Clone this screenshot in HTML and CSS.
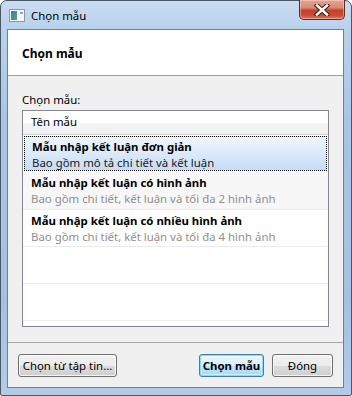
FILE: index.html
```html
<!DOCTYPE html>
<html lang="vi">
<head>
    <meta charset="UTF-8">
    <title>Chọn mẫu</title>
    <link rel="stylesheet" href="styles.css">
</head>
<body>
    <div class="window">
        <div class="titlebar">
            <svg class="app-icon" width="16" height="13" viewBox="0 0 16 13">
                <rect x="0.5" y="0.5" width="15" height="12" fill="#f4f6f8" stroke="#8c98a4"/>
                <rect x="2" y="2" width="6" height="9" fill="url(#g)"/>
                <rect x="11" y="3" width="3" height="2" fill="#9aa6b2"/>
                <defs>
                    <linearGradient id="g" x1="0" y1="0" x2="1" y2="1">
                        <stop offset="0" stop-color="#3d7bb8"/>
                        <stop offset="1" stop-color="#5aa56e"/>
                    </linearGradient>
                </defs>
            </svg>
            <span class="title-text">Chọn mẫu</span>
            <button class="close-btn">
                <svg width="18" height="12" viewBox="0 0 18 12">
                    <path d="M4 1.5 L14 10.5 M14 1.5 L4 10.5" stroke="#4a2626" stroke-width="4.6" stroke-linecap="square"/>
                    <path d="M4 1.5 L14 10.5 M14 1.5 L4 10.5" stroke="#ffffff" stroke-width="2.4" stroke-linecap="square"/>
                </svg>
            </button>
        </div>
        <div class="client">
            <div class="dialog-header">Chọn mẫu</div>
            <div class="dialog-body">
                <div class="field-label">Chọn mẫu:</div>
                <div class="listbox">
                    <div class="list-head">Tên mẫu</div>
                    <div class="list-row selected">
                        <div class="row-title">Mẫu nhập kết luận đơn giản</div>
                        <div class="row-desc">Bao gồm mô tả chi tiết và kết luận</div>
                    </div>
                    <div class="list-row hover">
                        <div class="row-title">Mẫu nhập kết luận có hình ảnh</div>
                        <div class="row-desc">Bao gồm chi tiết, kết luận và tối đa 2 hình ảnh</div>
                    </div>
                    <div class="list-row">
                        <div class="row-title">Mẫu nhập kết luận có nhiều hình ảnh</div>
                        <div class="row-desc">Bao gồm chi tiết, kết luận và tối đa 4 hình ảnh</div>
                    </div>
                    <div class="list-row empty"></div>
                    <div class="list-row empty"></div>
                </div>
            </div>
            <div class="dialog-footer">
                <button class="btn btn-file">Chọn từ tập tin...</button>
                <div class="spacer"></div>
                <button class="btn btn-default">Chọn mẫu</button>
                <button class="btn btn-close">Đóng</button>
            </div>
        </div>
    </div>
</body>
</html>
```

FILE: styles.css
```css
* {
    margin: 0;
    padding: 0;
    box-sizing: border-box;
}

body {
    font-family: "Noto Sans", "Open Sans", sans-serif;
    font-size: 11.4px;
    color: #000;
    background: #ffffff;
}

.window {
    width: 352px;
    height: 396px;
    border: 1px solid #4b5866;
    border-radius: 7px 7px 2px 2px;
    background: linear-gradient(to bottom, #c9dcf1 0px, #b9d1ec 28px, #a9c5e6 120px, #a4c1e4 300px, #b2cbe8 396px);
    display: flex;
    flex-direction: column;
    padding: 0 7px 7px 6px;
}

.titlebar {
    height: 28px;
    display: flex;
    align-items: center;
    position: relative;
}

.app-icon {
    margin-left: 2px;
    margin-top: 1px;
}

.title-text {
    margin-left: 6px;
    margin-top: 1px;
    color: #000;
}

.close-btn {
    position: absolute;
    top: -1px;
    right: -1px;
    width: 46px;
    height: 20px;
    border: 1px solid #5d2b23;
    border-top: none;
    border-radius: 0 0 5px 5px;
    background: linear-gradient(to bottom, #e4a594 0%, #d88a76 40%, #c5412a 55%, #c94a33 80%, #dc7a5f 100%);
    display: flex;
    align-items: center;
    justify-content: center;
    box-shadow: inset 0 0 0 1px rgba(255, 220, 210, 0.45);
}

.client {
    flex: 1;
    border: 1px solid #6f8094;
    display: flex;
    flex-direction: column;
    background: #f0f0f0;
}

.dialog-header {
    height: 46px;
    background: #ffffff;
    border-bottom: 1px solid #a0a0a0;
    padding: 15px 0 0 14px;
    font-weight: bold;
    font-size: 12px;
}

.dialog-body {
    flex: 1;
    padding: 16px 14px 15px 14px;
    display: flex;
    flex-direction: column;
    border-bottom: 1px solid #a7a7a7;
}

.field-label {
    height: 18px;
}

.listbox {
    flex: 1;
    border: 1px solid #828790;
    background: #ffffff;
    display: flex;
    flex-direction: column;
    overflow: hidden;
}

.list-head {
    height: 24px;
    padding: 3px 0 0 8px;
    background: linear-gradient(to bottom, #ffffff 0%, #ffffff 50%, #f4f5f6 51%, #eef0f2 100%);
    border-bottom: 1px solid #d5d5d5;
    margin-bottom: 1px;
}

.list-row {
    height: 37px;
    padding: 3px 0 0 8px;
    border-bottom: 1px solid #ececec;
    line-height: 16px;
    white-space: nowrap;
}

.list-row.selected {
    margin: 0 1px 1px;
    height: 35px;
    padding: 2px 0 0 7px;
    border: 1px dotted #000;
    background: linear-gradient(to bottom, #eef5fd 0%, #dce9fb 50%, #c6dcf8 100%);
}

.list-row.hover {
    background: #f7f7f7;
    height: 38px;
}

.row-title {
    font-weight: bold;
}

.row-desc {
    color: #8f8f8f;
}

.selected .row-desc {
    color: #1a1a1a;
}

.dialog-footer {
    height: 44px;
    display: flex;
    align-items: center;
    padding: 0 10px;
    gap: 8px;
}

.spacer {
    flex: 1;
}

.btn {
    height: 23px;
    font-family: inherit;
    font-size: 11.4px;
    color: #000;
    white-space: nowrap;
    border: 1px solid #707070;
    border-radius: 3px;
    background: linear-gradient(to bottom, #f2f2f2 0%, #ebebeb 50%, #dddddd 51%, #cfcfcf 100%);
    box-shadow: inset 0 0 0 1px rgba(255, 255, 255, 0.75);
    margin-top: 1px;
}

.btn-file {
    width: 99px;
}

.btn-default {
    width: 65px;
    font-weight: bold;
    border-color: #3c7fb1;
    box-shadow: inset 0 0 0 1px #7fdcff, inset 0 0 0 2px rgba(255, 255, 255, 0.5);
    background: linear-gradient(to bottom, #eaf6fd 0%, #d9f0fc 50%, #bee6fd 51%, #a7d9f5 100%);
}

.btn-close {
    width: 61px;
}
```
